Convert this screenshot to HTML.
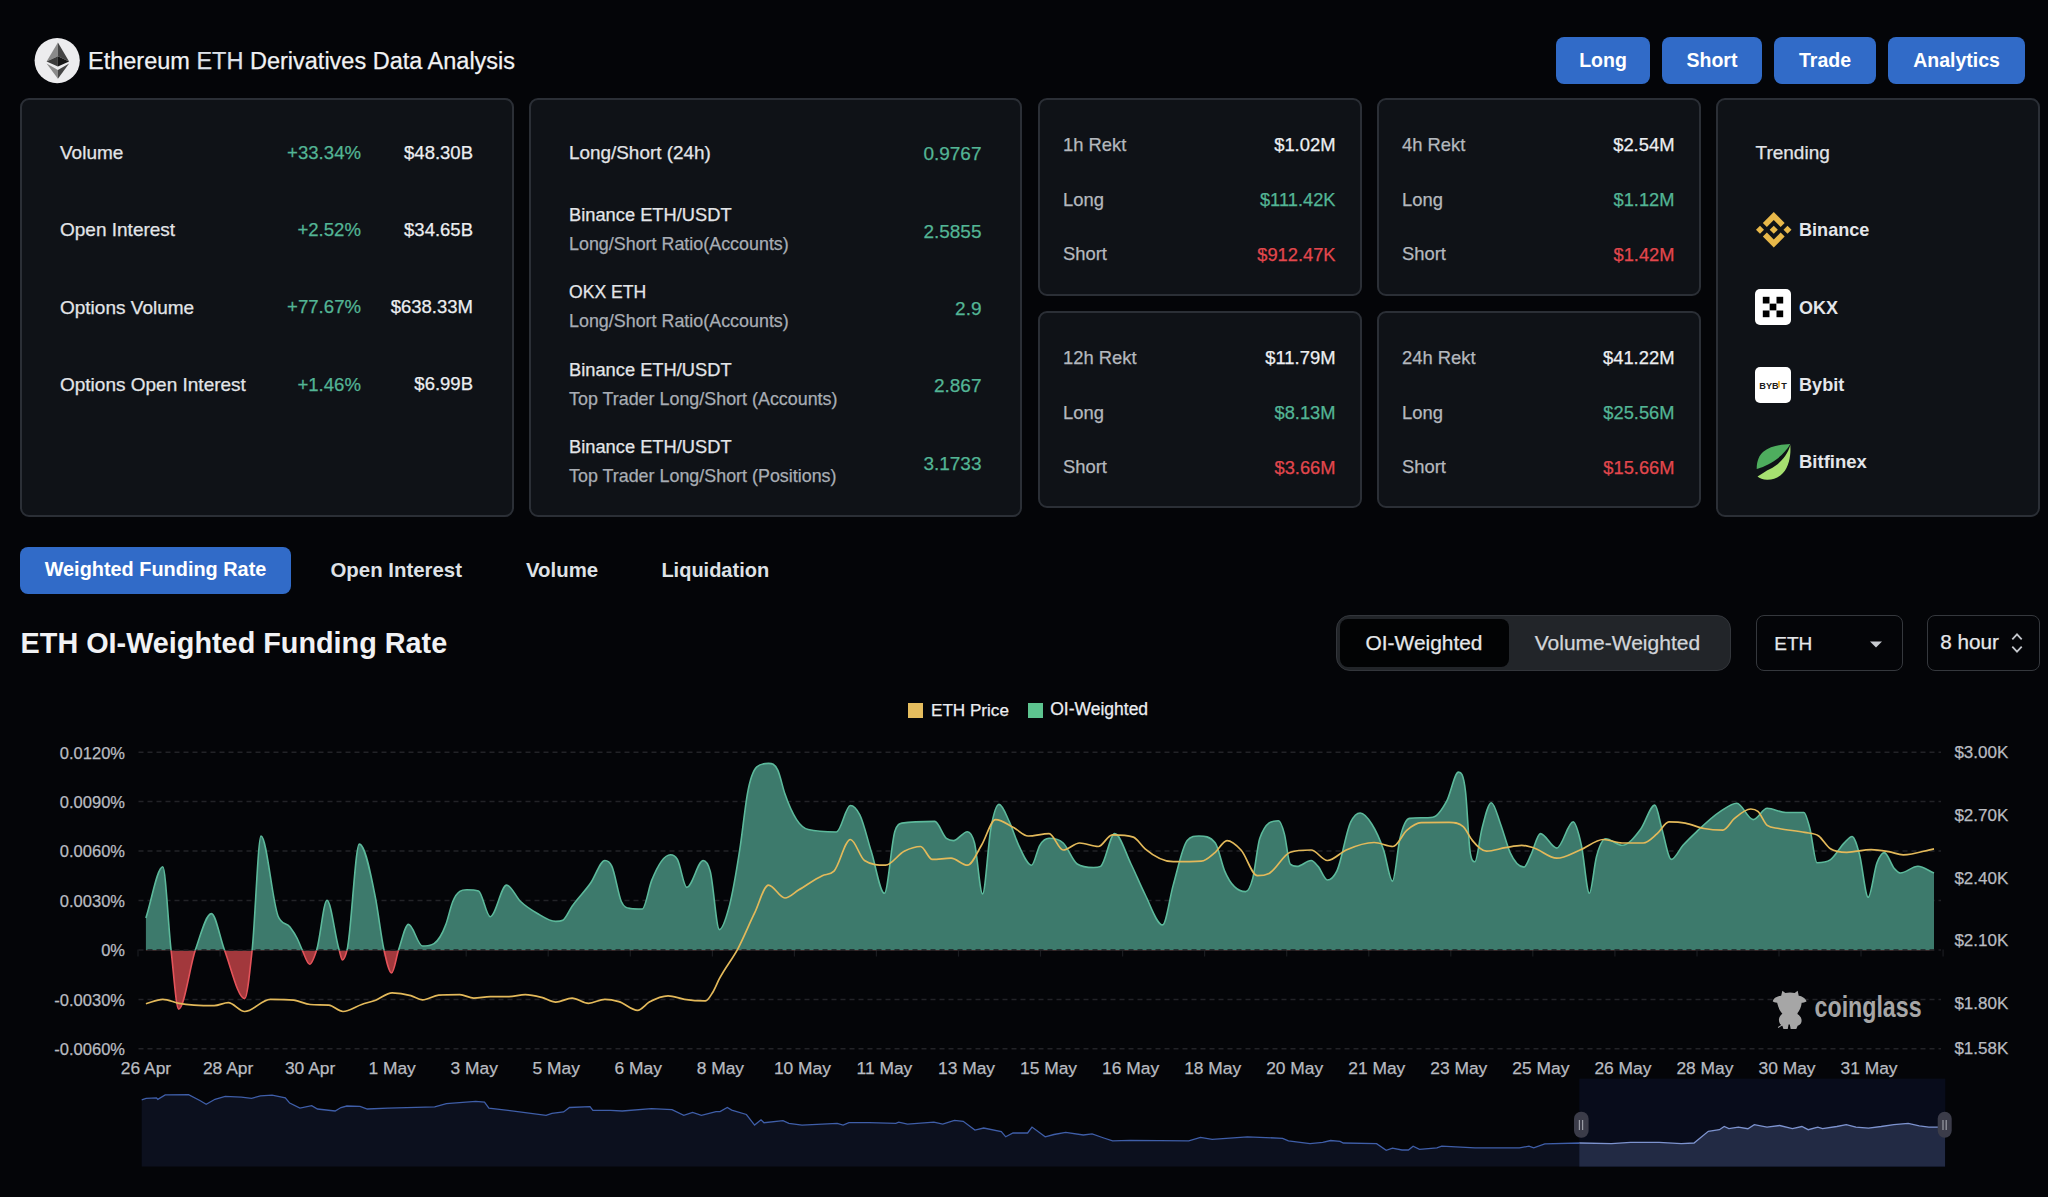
<!DOCTYPE html>
<html><head><meta charset="utf-8"><title>ETH Derivatives</title>
<style>
*{margin:0;padding:0;box-sizing:border-box}
html,body{width:2048px;height:1197px;overflow:hidden;background:#040508;font-family:"Liberation Sans",sans-serif;color:#eceef1}
.a{position:absolute;white-space:nowrap}
.s{-webkit-text-stroke:0.25px currentColor}
.card{position:absolute;background:#0f1217;border:2px solid #2b2f36;border-radius:9px}
.btn{position:absolute;background:#316bc8;border-radius:8px}
svg{position:absolute;overflow:visible}
</style></head><body>
<svg style="left:0;top:0" width="2048" height="100" viewBox="0 0 2048 100">
<circle cx="57.2" cy="60.6" r="22.6" fill="#ececee"/>
<polygon points="57.9,42.6 46.6,61.6 57.9,56.2" fill="#8a8a8a"/>
<polygon points="57.9,42.6 69.1,61.6 57.9,56.2" fill="#454545"/>
<polygon points="46.6,61.6 57.9,56.2 57.9,66.5" fill="#3c3c3c"/>
<polygon points="69.1,61.6 57.9,56.2 57.9,66.5" fill="#161616"/>
<polygon points="46.6,63.6 57.9,70.0 57.9,78.7" fill="#8a8a8a"/>
<polygon points="69.1,63.6 57.9,70.0 57.9,78.7" fill="#454545"/>
</svg>
<div class="a s" style="top:49.91px;font-size:23.5px;line-height:23.5px;color:#f1f2f4;left:88px;">Ethereum <span style="color:#dde2ea">ETH</span> Derivatives Data Analysis</div>
<div class="btn" style="left:1556px;top:37px;width:94px;height:47px"></div>
<div class="a" style="top:50.99px;font-size:19.5px;line-height:19.5px;color:#ffffff;font-weight:bold;left:1303.0px;width:600px;text-align:center;">Long</div>
<div class="btn" style="left:1662px;top:37px;width:100px;height:47px"></div>
<div class="a" style="top:50.99px;font-size:19.5px;line-height:19.5px;color:#ffffff;font-weight:bold;left:1412.0px;width:600px;text-align:center;">Short</div>
<div class="btn" style="left:1774px;top:37px;width:102px;height:47px"></div>
<div class="a" style="top:50.99px;font-size:19.5px;line-height:19.5px;color:#ffffff;font-weight:bold;left:1525.0px;width:600px;text-align:center;">Trade</div>
<div class="btn" style="left:1888px;top:37px;width:137px;height:47px"></div>
<div class="a" style="top:50.99px;font-size:19.5px;line-height:19.5px;color:#ffffff;font-weight:bold;left:1656.5px;width:600px;text-align:center;">Analytics</div>
<div class="card" style="left:20px;top:98px;width:494px;height:419px"></div>
<div class="card" style="left:529px;top:98px;width:493px;height:419px"></div>
<div class="card" style="left:1038px;top:98px;width:324px;height:198px"></div>
<div class="card" style="left:1377px;top:98px;width:324px;height:198px"></div>
<div class="card" style="left:1038px;top:311px;width:324px;height:197px"></div>
<div class="card" style="left:1377px;top:311px;width:324px;height:197px"></div>
<div class="card" style="left:1716px;top:98px;width:324px;height:419px"></div>
<div class="a s" style="top:143.12px;font-size:19px;line-height:19px;color:#e3e5e8;left:60px;">Volume</div>
<div class="a s" style="top:143.96px;font-size:18.6px;line-height:18.6px;color:#53b595;right:1687px;">+33.34%</div>
<div class="a s" style="top:143.54px;font-size:18.5px;line-height:18.5px;color:#eceef1;right:1575px;">$48.30B</div>
<div class="a s" style="top:220.32px;font-size:19px;line-height:19px;color:#e3e5e8;left:60px;">Open Interest</div>
<div class="a s" style="top:221.16px;font-size:18.6px;line-height:18.6px;color:#53b595;right:1687px;">+2.52%</div>
<div class="a s" style="top:220.74px;font-size:18.5px;line-height:18.5px;color:#eceef1;right:1575px;">$34.65B</div>
<div class="a s" style="top:297.52px;font-size:19px;line-height:19px;color:#e3e5e8;left:60px;">Options Volume</div>
<div class="a s" style="top:298.36px;font-size:18.6px;line-height:18.6px;color:#53b595;right:1687px;">+77.67%</div>
<div class="a s" style="top:297.94px;font-size:18.5px;line-height:18.5px;color:#eceef1;right:1575px;">$638.33M</div>
<div class="a s" style="top:374.72px;font-size:19px;line-height:19px;color:#e3e5e8;left:60px;">Options Open Interest</div>
<div class="a s" style="top:375.56px;font-size:18.6px;line-height:18.6px;color:#53b595;right:1687px;">+1.46%</div>
<div class="a s" style="top:375.14px;font-size:18.5px;line-height:18.5px;color:#eceef1;right:1575px;">$6.99B</div>
<div class="a s" style="top:143.60px;font-size:18.9px;line-height:18.9px;color:#e3e5e8;left:569px;">Long/Short (24h)</div>
<div class="a s" style="top:144.42px;font-size:19px;line-height:19px;color:#53b595;right:1066.5px;">0.9767</div>
<div class="a s" style="top:206.31px;font-size:18.3px;line-height:18.3px;color:#e3e5e8;left:569px;">Binance ETH/USDT</div>
<div class="a s" style="top:236.15px;font-size:17.9px;line-height:17.9px;color:#a8adb4;left:569px;">Long/Short Ratio(Accounts)</div>
<div class="a s" style="top:221.72px;font-size:19px;line-height:19px;color:#53b595;right:1066.5px;">2.5855</div>
<div class="a s" style="top:283.90px;font-size:17.6px;line-height:17.6px;color:#e3e5e8;left:569px;">OKX ETH</div>
<div class="a s" style="top:313.15px;font-size:17.9px;line-height:17.9px;color:#a8adb4;left:569px;">Long/Short Ratio(Accounts)</div>
<div class="a s" style="top:298.72px;font-size:19px;line-height:19px;color:#53b595;right:1066.5px;">2.9</div>
<div class="a s" style="top:360.71px;font-size:18.3px;line-height:18.3px;color:#e3e5e8;left:569px;">Binance ETH/USDT</div>
<div class="a s" style="top:390.55px;font-size:17.9px;line-height:17.9px;color:#a8adb4;left:569px;">Top Trader Long/Short (Accounts)</div>
<div class="a s" style="top:376.12px;font-size:19px;line-height:19px;color:#53b595;right:1066.5px;">2.867</div>
<div class="a s" style="top:438.21px;font-size:18.3px;line-height:18.3px;color:#e3e5e8;left:569px;">Binance ETH/USDT</div>
<div class="a s" style="top:468.05px;font-size:17.9px;line-height:17.9px;color:#a8adb4;left:569px;">Top Trader Long/Short (Positions)</div>
<div class="a s" style="top:453.62px;font-size:19px;line-height:19px;color:#53b595;right:1066.5px;">3.1733</div>
<div class="a s" style="top:135.92px;font-size:18.4px;line-height:18.4px;color:#b4b8be;left:1063px;">1h Rekt</div>
<div class="a s" style="top:135.92px;font-size:18.4px;line-height:18.4px;color:#eceef1;right:712.5px;">$1.02M</div>
<div class="a s" style="top:190.72px;font-size:18.4px;line-height:18.4px;color:#b4b8be;left:1063px;">Long</div>
<div class="a s" style="top:190.81px;font-size:18.3px;line-height:18.3px;color:#53b595;right:712.5px;">$111.42K</div>
<div class="a s" style="top:245.42px;font-size:18.4px;line-height:18.4px;color:#b4b8be;left:1063px;">Short</div>
<div class="a s" style="top:245.51px;font-size:18.3px;line-height:18.3px;color:#e2474d;right:712.5px;">$912.47K</div>
<div class="a s" style="top:135.92px;font-size:18.4px;line-height:18.4px;color:#b4b8be;left:1402px;">4h Rekt</div>
<div class="a s" style="top:135.92px;font-size:18.4px;line-height:18.4px;color:#eceef1;right:373.5px;">$2.54M</div>
<div class="a s" style="top:190.72px;font-size:18.4px;line-height:18.4px;color:#b4b8be;left:1402px;">Long</div>
<div class="a s" style="top:190.81px;font-size:18.3px;line-height:18.3px;color:#53b595;right:373.5px;">$1.12M</div>
<div class="a s" style="top:245.42px;font-size:18.4px;line-height:18.4px;color:#b4b8be;left:1402px;">Short</div>
<div class="a s" style="top:245.51px;font-size:18.3px;line-height:18.3px;color:#e2474d;right:373.5px;">$1.42M</div>
<div class="a s" style="top:348.92px;font-size:18.4px;line-height:18.4px;color:#b4b8be;left:1063px;">12h Rekt</div>
<div class="a s" style="top:348.92px;font-size:18.4px;line-height:18.4px;color:#eceef1;right:712.5px;">$11.79M</div>
<div class="a s" style="top:403.72px;font-size:18.4px;line-height:18.4px;color:#b4b8be;left:1063px;">Long</div>
<div class="a s" style="top:403.81px;font-size:18.3px;line-height:18.3px;color:#53b595;right:712.5px;">$8.13M</div>
<div class="a s" style="top:458.42px;font-size:18.4px;line-height:18.4px;color:#b4b8be;left:1063px;">Short</div>
<div class="a s" style="top:458.51px;font-size:18.3px;line-height:18.3px;color:#e2474d;right:712.5px;">$3.66M</div>
<div class="a s" style="top:348.92px;font-size:18.4px;line-height:18.4px;color:#b4b8be;left:1402px;">24h Rekt</div>
<div class="a s" style="top:348.92px;font-size:18.4px;line-height:18.4px;color:#eceef1;right:373.5px;">$41.22M</div>
<div class="a s" style="top:403.72px;font-size:18.4px;line-height:18.4px;color:#b4b8be;left:1402px;">Long</div>
<div class="a s" style="top:403.81px;font-size:18.3px;line-height:18.3px;color:#53b595;right:373.5px;">$25.56M</div>
<div class="a s" style="top:458.42px;font-size:18.4px;line-height:18.4px;color:#b4b8be;left:1402px;">Short</div>
<div class="a s" style="top:458.51px;font-size:18.3px;line-height:18.3px;color:#e2474d;right:373.5px;">$15.66M</div>
<div class="a s" style="top:143.02px;font-size:19px;line-height:19px;color:#e3e5e8;left:1755.5px;">Trending</div>
<div class="a" style="top:220.68px;font-size:18.1px;line-height:18.1px;color:#e4e6ea;font-weight:bold;left:1799px;">Binance</div>
<div class="a" style="top:299.06px;font-size:18px;line-height:18px;color:#e4e6ea;font-weight:bold;left:1799px;">OKX</div>
<div class="a" style="top:375.58px;font-size:18.1px;line-height:18.1px;color:#e4e6ea;font-weight:bold;left:1799px;">Bybit</div>
<div class="a" style="top:452.84px;font-size:18.5px;line-height:18.5px;color:#e4e6ea;font-weight:bold;left:1799px;">Bitfinex</div>
<svg style="left:1755.5px;top:212px" width="35.5" height="35.5" viewBox="0 0 126.61 126.61"><g fill="#e8b84a">
<path d="M38.73,53.2l24.59-24.58,24.6,24.6,14.3-14.31L63.32,0,24.42,38.9Z"/>
<path d="M0,63.31l14.3-14.31,14.31,14.31-14.31,14.3Z"/>
<path d="M38.73,73.41l24.59,24.59,24.6-24.6,14.31,14.29L63.32,126.61,24.42,87.72Z"/>
<path d="M98,63.31l14.3-14.31,14.31,14.3-14.31,14.31Z"/>
<path d="M77.83,63.3L63.32,48.78,48.82,63.28,63.32,77.8Z"/>
</g></svg>
<svg style="left:1755.4px;top:289.1px" width="36" height="36" viewBox="0 0 36 36">
<rect x="0" y="0" width="36" height="36" rx="5" fill="#ffffff"/>
<g fill="#000"><rect x="7.8" y="7.8" width="6.7" height="6.7"/><rect x="21.5" y="7.8" width="6.7" height="6.7"/>
<rect x="14.65" y="14.65" width="6.7" height="6.7"/><rect x="7.8" y="21.5" width="6.7" height="6.7"/><rect x="21.5" y="21.5" width="6.7" height="6.7"/></g>
</svg>
<svg style="left:1755.4px;top:366.9px" width="36" height="36" viewBox="0 0 36 36">
<rect x="0" y="0" width="36" height="36" rx="5" fill="#ffffff"/>
<text x="4.3" y="21.8" font-family="Liberation Sans" font-weight="bold" font-size="8.2" fill="#1a1a1a" textLength="27.5" lengthAdjust="spacingAndGlyphs">BYB T</text>
<rect x="23.2" y="14" width="1.5" height="6.5" fill="#f7a600"/>
</svg>
<svg style="left:1755.5px;top:443.8px" width="36" height="36" viewBox="0 0 36 36">
<path d="M34.3,0 C26,0.3 14,2 7.6,7.6 C3,11.5 0.8,17 0.7,25 C5,24 13,20.5 20.6,15.2 C26,11 31,6 34.3,0 Z" fill="#4ead5e"/>
<path d="M34.3,1.1 C35,10 33.5,22 27,29 C23,33.5 17,36 11,35.8 C7,35.7 3.5,34.5 1.5,32.6 C6,29.5 10,27 14,25 C22,21 31,13 34.3,1.1 Z" fill="#a6e070"/>
</svg>
<div class="btn" style="left:20px;top:547px;width:271px;height:47px"></div>
<div class="a" style="top:560.15px;font-size:19.9px;line-height:19.9px;color:#ffffff;font-weight:bold;left:-144.5px;width:600px;text-align:center;">Weighted Funding Rate</div>
<div class="a" style="top:559.73px;font-size:20.4px;line-height:20.4px;color:#dfe2e6;font-weight:bold;left:330.5px;">Open Interest</div>
<div class="a" style="top:559.73px;font-size:20.4px;line-height:20.4px;color:#dfe2e6;font-weight:bold;left:526px;">Volume</div>
<div class="a" style="top:560.07px;font-size:20px;line-height:20px;color:#dfe2e6;font-weight:bold;left:661.4px;">Liquidation</div>
<div class="a" style="top:628.62px;font-size:28.8px;line-height:28.8px;color:#f1f2f4;font-weight:bold;left:20.6px;">ETH OI-Weighted Funding Rate</div>
<div class="a" style="left:1336px;top:615px;width:395px;height:56px;background:#222529;border:1.5px solid #33363b;border-radius:14px"></div>
<div class="a" style="left:1340px;top:619px;width:169px;height:47.5px;background:#020304;border-radius:8px"></div>
<div class="a s" style="top:632.51px;font-size:20.9px;line-height:20.9px;color:#e6e8eb;left:1124px;width:600px;text-align:center;">OI-Weighted</div>
<div class="a s" style="top:632.42px;font-size:21px;line-height:21px;color:#d2d5d9;left:1317.4px;width:600px;text-align:center;">Volume-Weighted</div>
<div class="a" style="left:1755.5px;top:615px;width:147px;height:56px;border:1.5px solid #35383d;border-radius:8px"></div>
<div class="a s" style="top:633.72px;font-size:19px;line-height:19px;color:#e6e8eb;left:1774.3px;">ETH</div>
<svg style="left:1869px;top:641px" width="14" height="7" viewBox="0 0 14 7"><polygon points="1,0.5 13,0.5 7,6.5" fill="#c9ccd1"/></svg>
<div class="a" style="left:1927px;top:615px;width:113px;height:56px;border:1.5px solid #35383d;border-radius:8px"></div>
<div class="a s" style="top:632.28px;font-size:20.7px;line-height:20.7px;color:#e6e8eb;left:1940.3px;">8 hour</div>
<svg style="left:2010px;top:632px" width="14" height="22" viewBox="0 0 14 22"><polyline points="2.3,7.3 7,2.3 11.7,7.3" fill="none" stroke="#c4c7cc" stroke-width="1.8"/><polyline points="2.3,14.7 7,19.7 11.7,14.7" fill="none" stroke="#c4c7cc" stroke-width="1.8"/></svg>
<div class="a" style="left:908px;top:703px;width:15px;height:15px;background:#e5bd5e"></div>
<div class="a s" style="top:701.82px;font-size:17.1px;line-height:17.1px;color:#eceef1;left:931px;">ETH Price</div>
<div class="a" style="left:1027.5px;top:703px;width:15px;height:15px;background:#5dc48f"></div>
<div class="a s" style="top:701.49px;font-size:17.5px;line-height:17.5px;color:#eceef1;left:1050.2px;">OI-Weighted</div>
<div class="a s" style="top:744.53px;font-size:16.5px;line-height:16.5px;color:#b9bcc1;right:1923px;">0.0120%</div>
<div class="a s" style="top:793.96px;font-size:16.5px;line-height:16.5px;color:#b9bcc1;right:1923px;">0.0090%</div>
<div class="a s" style="top:843.39px;font-size:16.5px;line-height:16.5px;color:#b9bcc1;right:1923px;">0.0060%</div>
<div class="a s" style="top:892.82px;font-size:16.5px;line-height:16.5px;color:#b9bcc1;right:1923px;">0.0030%</div>
<div class="a s" style="top:942.25px;font-size:16.5px;line-height:16.5px;color:#b9bcc1;right:1923px;">0%</div>
<div class="a s" style="top:991.68px;font-size:16.5px;line-height:16.5px;color:#b9bcc1;right:1923px;">-0.0030%</div>
<div class="a s" style="top:1041.11px;font-size:16.5px;line-height:16.5px;color:#b9bcc1;right:1923px;">-0.0060%</div>
<div class="a s" style="top:743.71px;font-size:17px;line-height:17px;color:#b9bcc1;left:1954.4px;">$3.00K</div>
<div class="a s" style="top:806.61px;font-size:17px;line-height:17px;color:#b9bcc1;left:1954.4px;">$2.70K</div>
<div class="a s" style="top:869.51px;font-size:17px;line-height:17px;color:#b9bcc1;left:1954.4px;">$2.40K</div>
<div class="a s" style="top:932.31px;font-size:17px;line-height:17px;color:#b9bcc1;left:1954.4px;">$2.10K</div>
<div class="a s" style="top:995.21px;font-size:17px;line-height:17px;color:#b9bcc1;left:1954.4px;">$1.80K</div>
<div class="a s" style="top:1039.91px;font-size:17px;line-height:17px;color:#b9bcc1;left:1954.4px;">$1.58K</div>
<div class="a s" style="top:1060.47px;font-size:17.4px;line-height:17.4px;color:#b9bcc1;left:-154.0px;width:600px;text-align:center;">26 Apr</div>
<div class="a s" style="top:1060.47px;font-size:17.4px;line-height:17.4px;color:#b9bcc1;left:-71.94999999999999px;width:600px;text-align:center;">28 Apr</div>
<div class="a s" style="top:1060.47px;font-size:17.4px;line-height:17.4px;color:#b9bcc1;left:10.100000000000023px;width:600px;text-align:center;">30 Apr</div>
<div class="a s" style="top:1060.47px;font-size:17.4px;line-height:17.4px;color:#b9bcc1;left:92.14999999999998px;width:600px;text-align:center;">1 May</div>
<div class="a s" style="top:1060.47px;font-size:17.4px;line-height:17.4px;color:#b9bcc1;left:174.2px;width:600px;text-align:center;">3 May</div>
<div class="a s" style="top:1060.47px;font-size:17.4px;line-height:17.4px;color:#b9bcc1;left:256.25px;width:600px;text-align:center;">5 May</div>
<div class="a s" style="top:1060.47px;font-size:17.4px;line-height:17.4px;color:#b9bcc1;left:338.29999999999995px;width:600px;text-align:center;">6 May</div>
<div class="a s" style="top:1060.47px;font-size:17.4px;line-height:17.4px;color:#b9bcc1;left:420.35px;width:600px;text-align:center;">8 May</div>
<div class="a s" style="top:1060.47px;font-size:17.4px;line-height:17.4px;color:#b9bcc1;left:502.4px;width:600px;text-align:center;">10 May</div>
<div class="a s" style="top:1060.47px;font-size:17.4px;line-height:17.4px;color:#b9bcc1;left:584.4499999999999px;width:600px;text-align:center;">11 May</div>
<div class="a s" style="top:1060.47px;font-size:17.4px;line-height:17.4px;color:#b9bcc1;left:666.5px;width:600px;text-align:center;">13 May</div>
<div class="a s" style="top:1060.47px;font-size:17.4px;line-height:17.4px;color:#b9bcc1;left:748.55px;width:600px;text-align:center;">15 May</div>
<div class="a s" style="top:1060.47px;font-size:17.4px;line-height:17.4px;color:#b9bcc1;left:830.5999999999999px;width:600px;text-align:center;">16 May</div>
<div class="a s" style="top:1060.47px;font-size:17.4px;line-height:17.4px;color:#b9bcc1;left:912.6499999999999px;width:600px;text-align:center;">18 May</div>
<div class="a s" style="top:1060.47px;font-size:17.4px;line-height:17.4px;color:#b9bcc1;left:994.7px;width:600px;text-align:center;">20 May</div>
<div class="a s" style="top:1060.47px;font-size:17.4px;line-height:17.4px;color:#b9bcc1;left:1076.75px;width:600px;text-align:center;">21 May</div>
<div class="a s" style="top:1060.47px;font-size:17.4px;line-height:17.4px;color:#b9bcc1;left:1158.8px;width:600px;text-align:center;">23 May</div>
<div class="a s" style="top:1060.47px;font-size:17.4px;line-height:17.4px;color:#b9bcc1;left:1240.85px;width:600px;text-align:center;">25 May</div>
<div class="a s" style="top:1060.47px;font-size:17.4px;line-height:17.4px;color:#b9bcc1;left:1322.8999999999999px;width:600px;text-align:center;">26 May</div>
<div class="a s" style="top:1060.47px;font-size:17.4px;line-height:17.4px;color:#b9bcc1;left:1404.95px;width:600px;text-align:center;">28 May</div>
<div class="a s" style="top:1060.47px;font-size:17.4px;line-height:17.4px;color:#b9bcc1;left:1487.0px;width:600px;text-align:center;">30 May</div>
<div class="a s" style="top:1060.47px;font-size:17.4px;line-height:17.4px;color:#b9bcc1;left:1569.05px;width:600px;text-align:center;">31 May</div>
<svg style="left:0;top:0" width="2048" height="1197" viewBox="0 0 2048 1197">
<defs>
<clipPath id="cup"><rect x="0" y="0" width="2048" height="950.4"/></clipPath>
<clipPath id="cdn"><rect x="0" y="950.4" width="2048" height="400"/></clipPath>
</defs>
<line x1="138.5" y1="752.2" x2="1941" y2="752.2" stroke="#222327" stroke-width="1.5" stroke-dasharray="5 4"/><line x1="138.5" y1="801.6" x2="1941" y2="801.6" stroke="#222327" stroke-width="1.5" stroke-dasharray="5 4"/><line x1="138.5" y1="851.1" x2="1941" y2="851.1" stroke="#222327" stroke-width="1.5" stroke-dasharray="5 4"/><line x1="138.5" y1="900.5" x2="1941" y2="900.5" stroke="#222327" stroke-width="1.5" stroke-dasharray="5 4"/><line x1="138.5" y1="999.4" x2="1941" y2="999.4" stroke="#222327" stroke-width="1.5" stroke-dasharray="5 4"/><line x1="138.5" y1="1048.8" x2="1941" y2="1048.8" stroke="#222327" stroke-width="1.5" stroke-dasharray="5 4"/>
<line x1="138.0" y1="949.6" x2="138.0" y2="956.6" stroke="#1a1c20" stroke-width="1.2"/><line x1="220.1" y1="949.6" x2="220.1" y2="956.6" stroke="#1a1c20" stroke-width="1.2"/><line x1="302.1" y1="949.6" x2="302.1" y2="956.6" stroke="#1a1c20" stroke-width="1.2"/><line x1="384.1" y1="949.6" x2="384.1" y2="956.6" stroke="#1a1c20" stroke-width="1.2"/><line x1="466.2" y1="949.6" x2="466.2" y2="956.6" stroke="#1a1c20" stroke-width="1.2"/><line x1="548.2" y1="949.6" x2="548.2" y2="956.6" stroke="#1a1c20" stroke-width="1.2"/><line x1="630.3" y1="949.6" x2="630.3" y2="956.6" stroke="#1a1c20" stroke-width="1.2"/><line x1="712.4" y1="949.6" x2="712.4" y2="956.6" stroke="#1a1c20" stroke-width="1.2"/><line x1="794.4" y1="949.6" x2="794.4" y2="956.6" stroke="#1a1c20" stroke-width="1.2"/><line x1="876.4" y1="949.6" x2="876.4" y2="956.6" stroke="#1a1c20" stroke-width="1.2"/><line x1="958.5" y1="949.6" x2="958.5" y2="956.6" stroke="#1a1c20" stroke-width="1.2"/><line x1="1040.5" y1="949.6" x2="1040.5" y2="956.6" stroke="#1a1c20" stroke-width="1.2"/><line x1="1122.6" y1="949.6" x2="1122.6" y2="956.6" stroke="#1a1c20" stroke-width="1.2"/><line x1="1204.6" y1="949.6" x2="1204.6" y2="956.6" stroke="#1a1c20" stroke-width="1.2"/><line x1="1286.7" y1="949.6" x2="1286.7" y2="956.6" stroke="#1a1c20" stroke-width="1.2"/><line x1="1368.8" y1="949.6" x2="1368.8" y2="956.6" stroke="#1a1c20" stroke-width="1.2"/><line x1="1450.8" y1="949.6" x2="1450.8" y2="956.6" stroke="#1a1c20" stroke-width="1.2"/><line x1="1532.8" y1="949.6" x2="1532.8" y2="956.6" stroke="#1a1c20" stroke-width="1.2"/><line x1="1614.9" y1="949.6" x2="1614.9" y2="956.6" stroke="#1a1c20" stroke-width="1.2"/><line x1="1697.0" y1="949.6" x2="1697.0" y2="956.6" stroke="#1a1c20" stroke-width="1.2"/><line x1="1779.0" y1="949.6" x2="1779.0" y2="956.6" stroke="#1a1c20" stroke-width="1.2"/><line x1="1861.0" y1="949.6" x2="1861.0" y2="956.6" stroke="#1a1c20" stroke-width="1.2"/><line x1="1943.1" y1="949.6" x2="1943.1" y2="956.6" stroke="#1a1c20" stroke-width="1.2"/>
<path d="M145.9,917.9 C151.5,900.9 157.2,866.8 162.8,866.8 C165.5,866.8 168.3,925.2 171.0,949.5 C173.6,972.3 176.1,1009.1 178.7,1009.1 C184.3,1009.1 189.9,965.7 195.5,949.5 C200.8,934.2 206.1,913.6 211.4,913.6 C215.7,913.6 220.0,938.2 224.3,949.5 C231.1,967.4 237.9,998.6 244.7,998.6 C247.2,998.6 249.7,973.2 252.2,949.5 C255.1,921.7 258.1,836.0 261.0,836.0 C266.7,836.0 272.3,901.9 278.0,916.0 C282.0,925.9 286.0,921.7 290.0,927.0 C292.3,930.1 294.7,933.3 297.0,938.0 C298.7,941.3 300.3,945.9 302.0,949.5 C304.6,955.0 307.1,964.2 309.7,964.2 C312.1,964.2 314.4,957.1 316.8,949.5 C320.2,938.6 323.6,900.3 327.0,900.3 C331.0,900.3 335.0,936.5 339.0,949.5 C340.2,953.3 341.3,960.0 342.5,960.0 C344.1,960.0 345.6,955.8 347.2,949.5 C351.2,933.2 355.3,844.1 359.3,844.1 C364.8,844.1 370.2,870.6 375.7,899.1 C378.4,913.4 381.2,937.1 383.9,949.5 C386.5,961.2 389.0,972.9 391.6,972.9 C394.0,972.9 396.3,956.6 398.7,949.5 C402.0,939.7 405.2,924.4 408.5,924.4 C413.2,924.4 417.8,946.0 422.5,946.0 C426.3,946.0 430.2,946.0 434.0,943.6 C437.9,941.2 441.8,935.3 445.7,924.9 C448.1,918.6 450.4,907.3 452.8,901.5 C457.5,890.0 462.1,889.8 466.8,889.8 C470.7,889.8 474.6,889.8 478.5,891.0 C482.4,892.2 486.3,916.7 490.2,916.7 C495.7,916.7 501.1,885.1 506.6,885.1 C511.3,885.1 515.9,897.0 520.6,901.5 C526.1,906.8 531.5,910.0 537.0,913.2 C543.2,916.8 549.5,921.4 555.7,921.4 C558.1,921.4 560.4,921.4 562.8,920.2 C565.9,918.6 569.0,910.6 572.1,906.2 C578.3,897.3 584.6,891.8 590.8,882.8 C595.5,876.0 600.2,860.5 604.9,860.5 C607.2,860.5 609.6,861.6 611.9,866.4 C615.0,872.9 618.2,894.5 621.3,901.5 C624.4,908.4 627.5,908.1 630.6,908.5 C634.5,909.0 638.4,909.0 642.3,909.0 C645.4,909.0 648.6,888.2 651.7,880.4 C657.9,864.9 664.2,854.7 670.4,854.7 C672.7,854.7 675.1,855.5 677.4,859.4 C680.5,864.6 683.7,887.4 686.8,887.4 C692.3,887.4 697.7,860.5 703.2,860.5 C705.5,860.5 707.9,862.7 710.2,871.1 C713.3,882.2 716.3,929.6 719.4,929.6 C722.5,929.6 725.6,919.8 728.7,908.5 C732.6,894.2 736.5,871.1 740.4,845.3 C742.7,829.8 745.1,806.5 747.4,793.8 C750.5,776.8 753.7,769.7 756.8,766.9 C760.7,763.4 764.6,763.4 768.5,763.4 C771.6,763.4 774.8,763.4 777.9,770.4 C780.2,775.6 782.6,787.0 784.9,793.8 C788.8,805.2 792.7,813.6 796.6,819.6 C800.5,825.6 804.4,828.6 808.3,829.6 C817.7,832.0 827.0,832.0 836.4,832.0 C841.1,832.0 845.7,805.5 850.4,805.5 C853.5,805.5 856.7,808.7 859.8,814.9 C863.7,822.6 867.6,839.9 871.5,852.3 C875.8,866.0 880.1,893.3 884.4,893.3 C887.9,893.3 891.4,842.0 894.9,831.3 C897.2,824.1 899.6,823.5 901.9,823.1 C912.8,821.4 923.8,821.4 934.7,821.4 C938.6,821.4 942.5,835.4 946.4,838.3 C948.7,840.0 951.1,840.6 953.4,840.6 C958.1,840.6 962.7,831.7 967.4,831.7 C969.8,831.7 972.1,834.0 974.5,843.0 C977.2,853.2 979.9,894.0 982.6,894.0 C985.3,894.0 988.1,843.8 990.8,828.9 C993.5,814.0 996.3,804.4 999.0,804.4 C1002.5,804.4 1005.9,814.5 1009.4,821.9 C1012.5,828.5 1015.6,838.8 1018.7,845.3 C1023.0,854.4 1027.3,865.2 1031.6,865.2 C1034.3,865.2 1037.1,849.8 1039.8,845.3 C1042.9,840.2 1046.0,838.3 1049.1,838.3 C1053.8,838.3 1058.5,838.7 1063.2,843.0 C1067.9,847.3 1072.5,861.0 1077.2,864.0 C1082.7,867.5 1088.1,867.5 1093.6,867.5 C1095.9,867.5 1098.3,867.5 1100.6,866.4 C1105.3,864.2 1110.0,833.6 1114.7,833.6 C1120.1,833.6 1125.6,853.0 1131.0,864.0 C1135.7,873.5 1140.4,885.2 1145.1,894.5 C1150.9,906.0 1156.8,924.9 1162.6,924.9 C1166.1,924.9 1169.7,897.5 1173.2,885.1 C1177.9,868.7 1182.5,846.1 1187.2,840.6 C1191.1,836.0 1195.0,836.0 1198.9,836.0 C1204.4,836.0 1209.8,836.0 1215.3,843.0 C1218.4,847.0 1221.6,863.7 1224.7,871.1 C1231.7,887.7 1238.7,891.6 1245.7,891.6 C1248.1,891.6 1250.4,887.1 1252.8,878.1 C1255.1,869.2 1257.5,844.9 1259.8,838.3 C1266.0,820.7 1272.3,820.7 1278.5,820.7 C1280.4,820.7 1282.4,826.5 1284.3,833.6 C1286.3,840.8 1288.2,861.9 1290.2,864.0 C1292.5,866.4 1294.7,866.4 1297.0,866.4 C1301.7,866.4 1306.4,860.5 1311.1,860.5 C1313.4,860.5 1315.8,863.8 1318.1,866.4 C1321.2,869.8 1324.3,880.0 1327.4,880.0 C1330.5,880.0 1333.7,877.3 1336.8,871.1 C1341.5,861.9 1346.1,831.1 1350.8,821.9 C1353.9,815.7 1357.1,813.0 1360.2,813.0 C1364.1,813.0 1368.0,818.0 1371.9,824.2 C1375.8,830.4 1379.7,838.5 1383.6,850.0 C1386.6,858.7 1389.5,881.1 1392.5,881.1 C1395.0,881.1 1397.5,848.6 1400.0,838.3 C1403.1,825.4 1406.3,818.9 1409.4,818.4 C1417.2,817.2 1425.0,818.4 1432.8,817.2 C1437.5,816.5 1442.1,809.5 1446.8,800.8 C1450.7,793.5 1454.6,772.1 1458.5,772.1 C1460.8,772.1 1463.2,772.1 1465.5,791.5 C1467.1,804.5 1468.6,842.9 1470.2,852.3 C1471.8,861.7 1473.3,861.7 1474.9,861.7 C1477.2,861.7 1479.6,837.9 1481.9,828.9 C1485.0,816.8 1488.2,802.7 1491.3,802.7 C1494.4,802.7 1497.5,816.0 1500.6,824.2 C1503.7,832.5 1506.9,845.4 1510.0,852.3 C1514.7,862.6 1519.3,867.1 1524.0,867.1 C1526.3,867.1 1528.7,859.3 1531.0,854.7 C1534.1,848.5 1537.3,833.6 1540.4,833.6 C1545.9,833.6 1551.3,848.1 1556.8,848.1 C1562.3,848.1 1567.7,821.9 1573.2,821.9 C1575.9,821.9 1578.7,833.1 1581.4,845.3 C1584.1,857.2 1586.7,893.3 1589.4,893.3 C1591.7,893.3 1594.1,865.9 1596.4,857.0 C1599.5,845.2 1602.6,838.8 1605.7,838.8 C1611.2,838.8 1616.6,845.3 1622.1,845.3 C1628.3,845.3 1634.6,837.2 1640.8,828.9 C1645.5,822.6 1650.2,805.1 1654.9,805.1 C1657.2,805.1 1659.6,821.1 1661.9,828.9 C1665.0,839.3 1668.2,859.4 1671.3,859.4 C1675.2,859.4 1679.1,849.6 1683.0,845.3 C1687.7,840.1 1692.3,835.7 1697.0,831.3 C1704.8,823.9 1712.6,816.4 1720.4,811.4 C1725.9,807.9 1731.3,803.2 1736.8,803.2 C1742.3,803.2 1747.7,819.6 1753.2,819.6 C1757.9,819.6 1762.5,808.3 1767.2,808.3 C1773.4,808.3 1779.7,812.5 1785.9,812.5 C1791.9,812.5 1797.9,812.5 1803.9,812.5 C1805.8,812.5 1807.8,820.8 1809.7,827.7 C1812.1,836.4 1814.6,862.8 1817.0,862.8 C1821.4,862.8 1825.8,862.8 1830.2,859.9 C1835.1,856.7 1839.9,846.8 1844.8,842.3 C1847.2,840.0 1849.7,836.5 1852.1,836.5 C1854.5,836.5 1857.0,845.4 1859.4,854.0 C1862.3,864.4 1865.3,897.3 1868.2,897.3 C1871.1,897.3 1874.1,870.3 1877.0,862.8 C1879.4,856.6 1881.9,852.6 1884.3,852.6 C1887.7,852.6 1891.1,865.2 1894.5,868.7 C1896.5,870.7 1898.4,873.0 1900.4,873.0 C1906.2,873.0 1912.1,866.3 1917.9,866.3 C1923.3,866.3 1928.6,870.8 1934.0,873.0 L1934,950.4 L145.9,950.4 Z" fill="#3d7a6c" clip-path="url(#cup)"/>
<path d="M145.9,917.9 C151.5,900.9 157.2,866.8 162.8,866.8 C165.5,866.8 168.3,925.2 171.0,949.5 C173.6,972.3 176.1,1009.1 178.7,1009.1 C184.3,1009.1 189.9,965.7 195.5,949.5 C200.8,934.2 206.1,913.6 211.4,913.6 C215.7,913.6 220.0,938.2 224.3,949.5 C231.1,967.4 237.9,998.6 244.7,998.6 C247.2,998.6 249.7,973.2 252.2,949.5 C255.1,921.7 258.1,836.0 261.0,836.0 C266.7,836.0 272.3,901.9 278.0,916.0 C282.0,925.9 286.0,921.7 290.0,927.0 C292.3,930.1 294.7,933.3 297.0,938.0 C298.7,941.3 300.3,945.9 302.0,949.5 C304.6,955.0 307.1,964.2 309.7,964.2 C312.1,964.2 314.4,957.1 316.8,949.5 C320.2,938.6 323.6,900.3 327.0,900.3 C331.0,900.3 335.0,936.5 339.0,949.5 C340.2,953.3 341.3,960.0 342.5,960.0 C344.1,960.0 345.6,955.8 347.2,949.5 C351.2,933.2 355.3,844.1 359.3,844.1 C364.8,844.1 370.2,870.6 375.7,899.1 C378.4,913.4 381.2,937.1 383.9,949.5 C386.5,961.2 389.0,972.9 391.6,972.9 C394.0,972.9 396.3,956.6 398.7,949.5 C402.0,939.7 405.2,924.4 408.5,924.4 C413.2,924.4 417.8,946.0 422.5,946.0 C426.3,946.0 430.2,946.0 434.0,943.6 C437.9,941.2 441.8,935.3 445.7,924.9 C448.1,918.6 450.4,907.3 452.8,901.5 C457.5,890.0 462.1,889.8 466.8,889.8 C470.7,889.8 474.6,889.8 478.5,891.0 C482.4,892.2 486.3,916.7 490.2,916.7 C495.7,916.7 501.1,885.1 506.6,885.1 C511.3,885.1 515.9,897.0 520.6,901.5 C526.1,906.8 531.5,910.0 537.0,913.2 C543.2,916.8 549.5,921.4 555.7,921.4 C558.1,921.4 560.4,921.4 562.8,920.2 C565.9,918.6 569.0,910.6 572.1,906.2 C578.3,897.3 584.6,891.8 590.8,882.8 C595.5,876.0 600.2,860.5 604.9,860.5 C607.2,860.5 609.6,861.6 611.9,866.4 C615.0,872.9 618.2,894.5 621.3,901.5 C624.4,908.4 627.5,908.1 630.6,908.5 C634.5,909.0 638.4,909.0 642.3,909.0 C645.4,909.0 648.6,888.2 651.7,880.4 C657.9,864.9 664.2,854.7 670.4,854.7 C672.7,854.7 675.1,855.5 677.4,859.4 C680.5,864.6 683.7,887.4 686.8,887.4 C692.3,887.4 697.7,860.5 703.2,860.5 C705.5,860.5 707.9,862.7 710.2,871.1 C713.3,882.2 716.3,929.6 719.4,929.6 C722.5,929.6 725.6,919.8 728.7,908.5 C732.6,894.2 736.5,871.1 740.4,845.3 C742.7,829.8 745.1,806.5 747.4,793.8 C750.5,776.8 753.7,769.7 756.8,766.9 C760.7,763.4 764.6,763.4 768.5,763.4 C771.6,763.4 774.8,763.4 777.9,770.4 C780.2,775.6 782.6,787.0 784.9,793.8 C788.8,805.2 792.7,813.6 796.6,819.6 C800.5,825.6 804.4,828.6 808.3,829.6 C817.7,832.0 827.0,832.0 836.4,832.0 C841.1,832.0 845.7,805.5 850.4,805.5 C853.5,805.5 856.7,808.7 859.8,814.9 C863.7,822.6 867.6,839.9 871.5,852.3 C875.8,866.0 880.1,893.3 884.4,893.3 C887.9,893.3 891.4,842.0 894.9,831.3 C897.2,824.1 899.6,823.5 901.9,823.1 C912.8,821.4 923.8,821.4 934.7,821.4 C938.6,821.4 942.5,835.4 946.4,838.3 C948.7,840.0 951.1,840.6 953.4,840.6 C958.1,840.6 962.7,831.7 967.4,831.7 C969.8,831.7 972.1,834.0 974.5,843.0 C977.2,853.2 979.9,894.0 982.6,894.0 C985.3,894.0 988.1,843.8 990.8,828.9 C993.5,814.0 996.3,804.4 999.0,804.4 C1002.5,804.4 1005.9,814.5 1009.4,821.9 C1012.5,828.5 1015.6,838.8 1018.7,845.3 C1023.0,854.4 1027.3,865.2 1031.6,865.2 C1034.3,865.2 1037.1,849.8 1039.8,845.3 C1042.9,840.2 1046.0,838.3 1049.1,838.3 C1053.8,838.3 1058.5,838.7 1063.2,843.0 C1067.9,847.3 1072.5,861.0 1077.2,864.0 C1082.7,867.5 1088.1,867.5 1093.6,867.5 C1095.9,867.5 1098.3,867.5 1100.6,866.4 C1105.3,864.2 1110.0,833.6 1114.7,833.6 C1120.1,833.6 1125.6,853.0 1131.0,864.0 C1135.7,873.5 1140.4,885.2 1145.1,894.5 C1150.9,906.0 1156.8,924.9 1162.6,924.9 C1166.1,924.9 1169.7,897.5 1173.2,885.1 C1177.9,868.7 1182.5,846.1 1187.2,840.6 C1191.1,836.0 1195.0,836.0 1198.9,836.0 C1204.4,836.0 1209.8,836.0 1215.3,843.0 C1218.4,847.0 1221.6,863.7 1224.7,871.1 C1231.7,887.7 1238.7,891.6 1245.7,891.6 C1248.1,891.6 1250.4,887.1 1252.8,878.1 C1255.1,869.2 1257.5,844.9 1259.8,838.3 C1266.0,820.7 1272.3,820.7 1278.5,820.7 C1280.4,820.7 1282.4,826.5 1284.3,833.6 C1286.3,840.8 1288.2,861.9 1290.2,864.0 C1292.5,866.4 1294.7,866.4 1297.0,866.4 C1301.7,866.4 1306.4,860.5 1311.1,860.5 C1313.4,860.5 1315.8,863.8 1318.1,866.4 C1321.2,869.8 1324.3,880.0 1327.4,880.0 C1330.5,880.0 1333.7,877.3 1336.8,871.1 C1341.5,861.9 1346.1,831.1 1350.8,821.9 C1353.9,815.7 1357.1,813.0 1360.2,813.0 C1364.1,813.0 1368.0,818.0 1371.9,824.2 C1375.8,830.4 1379.7,838.5 1383.6,850.0 C1386.6,858.7 1389.5,881.1 1392.5,881.1 C1395.0,881.1 1397.5,848.6 1400.0,838.3 C1403.1,825.4 1406.3,818.9 1409.4,818.4 C1417.2,817.2 1425.0,818.4 1432.8,817.2 C1437.5,816.5 1442.1,809.5 1446.8,800.8 C1450.7,793.5 1454.6,772.1 1458.5,772.1 C1460.8,772.1 1463.2,772.1 1465.5,791.5 C1467.1,804.5 1468.6,842.9 1470.2,852.3 C1471.8,861.7 1473.3,861.7 1474.9,861.7 C1477.2,861.7 1479.6,837.9 1481.9,828.9 C1485.0,816.8 1488.2,802.7 1491.3,802.7 C1494.4,802.7 1497.5,816.0 1500.6,824.2 C1503.7,832.5 1506.9,845.4 1510.0,852.3 C1514.7,862.6 1519.3,867.1 1524.0,867.1 C1526.3,867.1 1528.7,859.3 1531.0,854.7 C1534.1,848.5 1537.3,833.6 1540.4,833.6 C1545.9,833.6 1551.3,848.1 1556.8,848.1 C1562.3,848.1 1567.7,821.9 1573.2,821.9 C1575.9,821.9 1578.7,833.1 1581.4,845.3 C1584.1,857.2 1586.7,893.3 1589.4,893.3 C1591.7,893.3 1594.1,865.9 1596.4,857.0 C1599.5,845.2 1602.6,838.8 1605.7,838.8 C1611.2,838.8 1616.6,845.3 1622.1,845.3 C1628.3,845.3 1634.6,837.2 1640.8,828.9 C1645.5,822.6 1650.2,805.1 1654.9,805.1 C1657.2,805.1 1659.6,821.1 1661.9,828.9 C1665.0,839.3 1668.2,859.4 1671.3,859.4 C1675.2,859.4 1679.1,849.6 1683.0,845.3 C1687.7,840.1 1692.3,835.7 1697.0,831.3 C1704.8,823.9 1712.6,816.4 1720.4,811.4 C1725.9,807.9 1731.3,803.2 1736.8,803.2 C1742.3,803.2 1747.7,819.6 1753.2,819.6 C1757.9,819.6 1762.5,808.3 1767.2,808.3 C1773.4,808.3 1779.7,812.5 1785.9,812.5 C1791.9,812.5 1797.9,812.5 1803.9,812.5 C1805.8,812.5 1807.8,820.8 1809.7,827.7 C1812.1,836.4 1814.6,862.8 1817.0,862.8 C1821.4,862.8 1825.8,862.8 1830.2,859.9 C1835.1,856.7 1839.9,846.8 1844.8,842.3 C1847.2,840.0 1849.7,836.5 1852.1,836.5 C1854.5,836.5 1857.0,845.4 1859.4,854.0 C1862.3,864.4 1865.3,897.3 1868.2,897.3 C1871.1,897.3 1874.1,870.3 1877.0,862.8 C1879.4,856.6 1881.9,852.6 1884.3,852.6 C1887.7,852.6 1891.1,865.2 1894.5,868.7 C1896.5,870.7 1898.4,873.0 1900.4,873.0 C1906.2,873.0 1912.1,866.3 1917.9,866.3 C1923.3,866.3 1928.6,870.8 1934.0,873.0 L1934,950.4 L145.9,950.4 Z" fill="#a2383c" clip-path="url(#cdn)"/>
<line x1="138.5" y1="949.9" x2="1941" y2="949.9" stroke="#1c1d21" stroke-width="1.5" stroke-dasharray="5 4"/>
<path d="M145.9,917.9 C151.5,900.9 157.2,866.8 162.8,866.8 C165.5,866.8 168.3,925.2 171.0,949.5 C173.6,972.3 176.1,1009.1 178.7,1009.1 C184.3,1009.1 189.9,965.7 195.5,949.5 C200.8,934.2 206.1,913.6 211.4,913.6 C215.7,913.6 220.0,938.2 224.3,949.5 C231.1,967.4 237.9,998.6 244.7,998.6 C247.2,998.6 249.7,973.2 252.2,949.5 C255.1,921.7 258.1,836.0 261.0,836.0 C266.7,836.0 272.3,901.9 278.0,916.0 C282.0,925.9 286.0,921.7 290.0,927.0 C292.3,930.1 294.7,933.3 297.0,938.0 C298.7,941.3 300.3,945.9 302.0,949.5 C304.6,955.0 307.1,964.2 309.7,964.2 C312.1,964.2 314.4,957.1 316.8,949.5 C320.2,938.6 323.6,900.3 327.0,900.3 C331.0,900.3 335.0,936.5 339.0,949.5 C340.2,953.3 341.3,960.0 342.5,960.0 C344.1,960.0 345.6,955.8 347.2,949.5 C351.2,933.2 355.3,844.1 359.3,844.1 C364.8,844.1 370.2,870.6 375.7,899.1 C378.4,913.4 381.2,937.1 383.9,949.5 C386.5,961.2 389.0,972.9 391.6,972.9 C394.0,972.9 396.3,956.6 398.7,949.5 C402.0,939.7 405.2,924.4 408.5,924.4 C413.2,924.4 417.8,946.0 422.5,946.0 C426.3,946.0 430.2,946.0 434.0,943.6 C437.9,941.2 441.8,935.3 445.7,924.9 C448.1,918.6 450.4,907.3 452.8,901.5 C457.5,890.0 462.1,889.8 466.8,889.8 C470.7,889.8 474.6,889.8 478.5,891.0 C482.4,892.2 486.3,916.7 490.2,916.7 C495.7,916.7 501.1,885.1 506.6,885.1 C511.3,885.1 515.9,897.0 520.6,901.5 C526.1,906.8 531.5,910.0 537.0,913.2 C543.2,916.8 549.5,921.4 555.7,921.4 C558.1,921.4 560.4,921.4 562.8,920.2 C565.9,918.6 569.0,910.6 572.1,906.2 C578.3,897.3 584.6,891.8 590.8,882.8 C595.5,876.0 600.2,860.5 604.9,860.5 C607.2,860.5 609.6,861.6 611.9,866.4 C615.0,872.9 618.2,894.5 621.3,901.5 C624.4,908.4 627.5,908.1 630.6,908.5 C634.5,909.0 638.4,909.0 642.3,909.0 C645.4,909.0 648.6,888.2 651.7,880.4 C657.9,864.9 664.2,854.7 670.4,854.7 C672.7,854.7 675.1,855.5 677.4,859.4 C680.5,864.6 683.7,887.4 686.8,887.4 C692.3,887.4 697.7,860.5 703.2,860.5 C705.5,860.5 707.9,862.7 710.2,871.1 C713.3,882.2 716.3,929.6 719.4,929.6 C722.5,929.6 725.6,919.8 728.7,908.5 C732.6,894.2 736.5,871.1 740.4,845.3 C742.7,829.8 745.1,806.5 747.4,793.8 C750.5,776.8 753.7,769.7 756.8,766.9 C760.7,763.4 764.6,763.4 768.5,763.4 C771.6,763.4 774.8,763.4 777.9,770.4 C780.2,775.6 782.6,787.0 784.9,793.8 C788.8,805.2 792.7,813.6 796.6,819.6 C800.5,825.6 804.4,828.6 808.3,829.6 C817.7,832.0 827.0,832.0 836.4,832.0 C841.1,832.0 845.7,805.5 850.4,805.5 C853.5,805.5 856.7,808.7 859.8,814.9 C863.7,822.6 867.6,839.9 871.5,852.3 C875.8,866.0 880.1,893.3 884.4,893.3 C887.9,893.3 891.4,842.0 894.9,831.3 C897.2,824.1 899.6,823.5 901.9,823.1 C912.8,821.4 923.8,821.4 934.7,821.4 C938.6,821.4 942.5,835.4 946.4,838.3 C948.7,840.0 951.1,840.6 953.4,840.6 C958.1,840.6 962.7,831.7 967.4,831.7 C969.8,831.7 972.1,834.0 974.5,843.0 C977.2,853.2 979.9,894.0 982.6,894.0 C985.3,894.0 988.1,843.8 990.8,828.9 C993.5,814.0 996.3,804.4 999.0,804.4 C1002.5,804.4 1005.9,814.5 1009.4,821.9 C1012.5,828.5 1015.6,838.8 1018.7,845.3 C1023.0,854.4 1027.3,865.2 1031.6,865.2 C1034.3,865.2 1037.1,849.8 1039.8,845.3 C1042.9,840.2 1046.0,838.3 1049.1,838.3 C1053.8,838.3 1058.5,838.7 1063.2,843.0 C1067.9,847.3 1072.5,861.0 1077.2,864.0 C1082.7,867.5 1088.1,867.5 1093.6,867.5 C1095.9,867.5 1098.3,867.5 1100.6,866.4 C1105.3,864.2 1110.0,833.6 1114.7,833.6 C1120.1,833.6 1125.6,853.0 1131.0,864.0 C1135.7,873.5 1140.4,885.2 1145.1,894.5 C1150.9,906.0 1156.8,924.9 1162.6,924.9 C1166.1,924.9 1169.7,897.5 1173.2,885.1 C1177.9,868.7 1182.5,846.1 1187.2,840.6 C1191.1,836.0 1195.0,836.0 1198.9,836.0 C1204.4,836.0 1209.8,836.0 1215.3,843.0 C1218.4,847.0 1221.6,863.7 1224.7,871.1 C1231.7,887.7 1238.7,891.6 1245.7,891.6 C1248.1,891.6 1250.4,887.1 1252.8,878.1 C1255.1,869.2 1257.5,844.9 1259.8,838.3 C1266.0,820.7 1272.3,820.7 1278.5,820.7 C1280.4,820.7 1282.4,826.5 1284.3,833.6 C1286.3,840.8 1288.2,861.9 1290.2,864.0 C1292.5,866.4 1294.7,866.4 1297.0,866.4 C1301.7,866.4 1306.4,860.5 1311.1,860.5 C1313.4,860.5 1315.8,863.8 1318.1,866.4 C1321.2,869.8 1324.3,880.0 1327.4,880.0 C1330.5,880.0 1333.7,877.3 1336.8,871.1 C1341.5,861.9 1346.1,831.1 1350.8,821.9 C1353.9,815.7 1357.1,813.0 1360.2,813.0 C1364.1,813.0 1368.0,818.0 1371.9,824.2 C1375.8,830.4 1379.7,838.5 1383.6,850.0 C1386.6,858.7 1389.5,881.1 1392.5,881.1 C1395.0,881.1 1397.5,848.6 1400.0,838.3 C1403.1,825.4 1406.3,818.9 1409.4,818.4 C1417.2,817.2 1425.0,818.4 1432.8,817.2 C1437.5,816.5 1442.1,809.5 1446.8,800.8 C1450.7,793.5 1454.6,772.1 1458.5,772.1 C1460.8,772.1 1463.2,772.1 1465.5,791.5 C1467.1,804.5 1468.6,842.9 1470.2,852.3 C1471.8,861.7 1473.3,861.7 1474.9,861.7 C1477.2,861.7 1479.6,837.9 1481.9,828.9 C1485.0,816.8 1488.2,802.7 1491.3,802.7 C1494.4,802.7 1497.5,816.0 1500.6,824.2 C1503.7,832.5 1506.9,845.4 1510.0,852.3 C1514.7,862.6 1519.3,867.1 1524.0,867.1 C1526.3,867.1 1528.7,859.3 1531.0,854.7 C1534.1,848.5 1537.3,833.6 1540.4,833.6 C1545.9,833.6 1551.3,848.1 1556.8,848.1 C1562.3,848.1 1567.7,821.9 1573.2,821.9 C1575.9,821.9 1578.7,833.1 1581.4,845.3 C1584.1,857.2 1586.7,893.3 1589.4,893.3 C1591.7,893.3 1594.1,865.9 1596.4,857.0 C1599.5,845.2 1602.6,838.8 1605.7,838.8 C1611.2,838.8 1616.6,845.3 1622.1,845.3 C1628.3,845.3 1634.6,837.2 1640.8,828.9 C1645.5,822.6 1650.2,805.1 1654.9,805.1 C1657.2,805.1 1659.6,821.1 1661.9,828.9 C1665.0,839.3 1668.2,859.4 1671.3,859.4 C1675.2,859.4 1679.1,849.6 1683.0,845.3 C1687.7,840.1 1692.3,835.7 1697.0,831.3 C1704.8,823.9 1712.6,816.4 1720.4,811.4 C1725.9,807.9 1731.3,803.2 1736.8,803.2 C1742.3,803.2 1747.7,819.6 1753.2,819.6 C1757.9,819.6 1762.5,808.3 1767.2,808.3 C1773.4,808.3 1779.7,812.5 1785.9,812.5 C1791.9,812.5 1797.9,812.5 1803.9,812.5 C1805.8,812.5 1807.8,820.8 1809.7,827.7 C1812.1,836.4 1814.6,862.8 1817.0,862.8 C1821.4,862.8 1825.8,862.8 1830.2,859.9 C1835.1,856.7 1839.9,846.8 1844.8,842.3 C1847.2,840.0 1849.7,836.5 1852.1,836.5 C1854.5,836.5 1857.0,845.4 1859.4,854.0 C1862.3,864.4 1865.3,897.3 1868.2,897.3 C1871.1,897.3 1874.1,870.3 1877.0,862.8 C1879.4,856.6 1881.9,852.6 1884.3,852.6 C1887.7,852.6 1891.1,865.2 1894.5,868.7 C1896.5,870.7 1898.4,873.0 1900.4,873.0 C1906.2,873.0 1912.1,866.3 1917.9,866.3 C1923.3,866.3 1928.6,870.8 1934.0,873.0" fill="none" stroke="#5cb99b" stroke-width="1.6" clip-path="url(#cup)"/>
<path d="M145.9,917.9 C151.5,900.9 157.2,866.8 162.8,866.8 C165.5,866.8 168.3,925.2 171.0,949.5 C173.6,972.3 176.1,1009.1 178.7,1009.1 C184.3,1009.1 189.9,965.7 195.5,949.5 C200.8,934.2 206.1,913.6 211.4,913.6 C215.7,913.6 220.0,938.2 224.3,949.5 C231.1,967.4 237.9,998.6 244.7,998.6 C247.2,998.6 249.7,973.2 252.2,949.5 C255.1,921.7 258.1,836.0 261.0,836.0 C266.7,836.0 272.3,901.9 278.0,916.0 C282.0,925.9 286.0,921.7 290.0,927.0 C292.3,930.1 294.7,933.3 297.0,938.0 C298.7,941.3 300.3,945.9 302.0,949.5 C304.6,955.0 307.1,964.2 309.7,964.2 C312.1,964.2 314.4,957.1 316.8,949.5 C320.2,938.6 323.6,900.3 327.0,900.3 C331.0,900.3 335.0,936.5 339.0,949.5 C340.2,953.3 341.3,960.0 342.5,960.0 C344.1,960.0 345.6,955.8 347.2,949.5 C351.2,933.2 355.3,844.1 359.3,844.1 C364.8,844.1 370.2,870.6 375.7,899.1 C378.4,913.4 381.2,937.1 383.9,949.5 C386.5,961.2 389.0,972.9 391.6,972.9 C394.0,972.9 396.3,956.6 398.7,949.5 C402.0,939.7 405.2,924.4 408.5,924.4 C413.2,924.4 417.8,946.0 422.5,946.0 C426.3,946.0 430.2,946.0 434.0,943.6 C437.9,941.2 441.8,935.3 445.7,924.9 C448.1,918.6 450.4,907.3 452.8,901.5 C457.5,890.0 462.1,889.8 466.8,889.8 C470.7,889.8 474.6,889.8 478.5,891.0 C482.4,892.2 486.3,916.7 490.2,916.7 C495.7,916.7 501.1,885.1 506.6,885.1 C511.3,885.1 515.9,897.0 520.6,901.5 C526.1,906.8 531.5,910.0 537.0,913.2 C543.2,916.8 549.5,921.4 555.7,921.4 C558.1,921.4 560.4,921.4 562.8,920.2 C565.9,918.6 569.0,910.6 572.1,906.2 C578.3,897.3 584.6,891.8 590.8,882.8 C595.5,876.0 600.2,860.5 604.9,860.5 C607.2,860.5 609.6,861.6 611.9,866.4 C615.0,872.9 618.2,894.5 621.3,901.5 C624.4,908.4 627.5,908.1 630.6,908.5 C634.5,909.0 638.4,909.0 642.3,909.0 C645.4,909.0 648.6,888.2 651.7,880.4 C657.9,864.9 664.2,854.7 670.4,854.7 C672.7,854.7 675.1,855.5 677.4,859.4 C680.5,864.6 683.7,887.4 686.8,887.4 C692.3,887.4 697.7,860.5 703.2,860.5 C705.5,860.5 707.9,862.7 710.2,871.1 C713.3,882.2 716.3,929.6 719.4,929.6 C722.5,929.6 725.6,919.8 728.7,908.5 C732.6,894.2 736.5,871.1 740.4,845.3 C742.7,829.8 745.1,806.5 747.4,793.8 C750.5,776.8 753.7,769.7 756.8,766.9 C760.7,763.4 764.6,763.4 768.5,763.4 C771.6,763.4 774.8,763.4 777.9,770.4 C780.2,775.6 782.6,787.0 784.9,793.8 C788.8,805.2 792.7,813.6 796.6,819.6 C800.5,825.6 804.4,828.6 808.3,829.6 C817.7,832.0 827.0,832.0 836.4,832.0 C841.1,832.0 845.7,805.5 850.4,805.5 C853.5,805.5 856.7,808.7 859.8,814.9 C863.7,822.6 867.6,839.9 871.5,852.3 C875.8,866.0 880.1,893.3 884.4,893.3 C887.9,893.3 891.4,842.0 894.9,831.3 C897.2,824.1 899.6,823.5 901.9,823.1 C912.8,821.4 923.8,821.4 934.7,821.4 C938.6,821.4 942.5,835.4 946.4,838.3 C948.7,840.0 951.1,840.6 953.4,840.6 C958.1,840.6 962.7,831.7 967.4,831.7 C969.8,831.7 972.1,834.0 974.5,843.0 C977.2,853.2 979.9,894.0 982.6,894.0 C985.3,894.0 988.1,843.8 990.8,828.9 C993.5,814.0 996.3,804.4 999.0,804.4 C1002.5,804.4 1005.9,814.5 1009.4,821.9 C1012.5,828.5 1015.6,838.8 1018.7,845.3 C1023.0,854.4 1027.3,865.2 1031.6,865.2 C1034.3,865.2 1037.1,849.8 1039.8,845.3 C1042.9,840.2 1046.0,838.3 1049.1,838.3 C1053.8,838.3 1058.5,838.7 1063.2,843.0 C1067.9,847.3 1072.5,861.0 1077.2,864.0 C1082.7,867.5 1088.1,867.5 1093.6,867.5 C1095.9,867.5 1098.3,867.5 1100.6,866.4 C1105.3,864.2 1110.0,833.6 1114.7,833.6 C1120.1,833.6 1125.6,853.0 1131.0,864.0 C1135.7,873.5 1140.4,885.2 1145.1,894.5 C1150.9,906.0 1156.8,924.9 1162.6,924.9 C1166.1,924.9 1169.7,897.5 1173.2,885.1 C1177.9,868.7 1182.5,846.1 1187.2,840.6 C1191.1,836.0 1195.0,836.0 1198.9,836.0 C1204.4,836.0 1209.8,836.0 1215.3,843.0 C1218.4,847.0 1221.6,863.7 1224.7,871.1 C1231.7,887.7 1238.7,891.6 1245.7,891.6 C1248.1,891.6 1250.4,887.1 1252.8,878.1 C1255.1,869.2 1257.5,844.9 1259.8,838.3 C1266.0,820.7 1272.3,820.7 1278.5,820.7 C1280.4,820.7 1282.4,826.5 1284.3,833.6 C1286.3,840.8 1288.2,861.9 1290.2,864.0 C1292.5,866.4 1294.7,866.4 1297.0,866.4 C1301.7,866.4 1306.4,860.5 1311.1,860.5 C1313.4,860.5 1315.8,863.8 1318.1,866.4 C1321.2,869.8 1324.3,880.0 1327.4,880.0 C1330.5,880.0 1333.7,877.3 1336.8,871.1 C1341.5,861.9 1346.1,831.1 1350.8,821.9 C1353.9,815.7 1357.1,813.0 1360.2,813.0 C1364.1,813.0 1368.0,818.0 1371.9,824.2 C1375.8,830.4 1379.7,838.5 1383.6,850.0 C1386.6,858.7 1389.5,881.1 1392.5,881.1 C1395.0,881.1 1397.5,848.6 1400.0,838.3 C1403.1,825.4 1406.3,818.9 1409.4,818.4 C1417.2,817.2 1425.0,818.4 1432.8,817.2 C1437.5,816.5 1442.1,809.5 1446.8,800.8 C1450.7,793.5 1454.6,772.1 1458.5,772.1 C1460.8,772.1 1463.2,772.1 1465.5,791.5 C1467.1,804.5 1468.6,842.9 1470.2,852.3 C1471.8,861.7 1473.3,861.7 1474.9,861.7 C1477.2,861.7 1479.6,837.9 1481.9,828.9 C1485.0,816.8 1488.2,802.7 1491.3,802.7 C1494.4,802.7 1497.5,816.0 1500.6,824.2 C1503.7,832.5 1506.9,845.4 1510.0,852.3 C1514.7,862.6 1519.3,867.1 1524.0,867.1 C1526.3,867.1 1528.7,859.3 1531.0,854.7 C1534.1,848.5 1537.3,833.6 1540.4,833.6 C1545.9,833.6 1551.3,848.1 1556.8,848.1 C1562.3,848.1 1567.7,821.9 1573.2,821.9 C1575.9,821.9 1578.7,833.1 1581.4,845.3 C1584.1,857.2 1586.7,893.3 1589.4,893.3 C1591.7,893.3 1594.1,865.9 1596.4,857.0 C1599.5,845.2 1602.6,838.8 1605.7,838.8 C1611.2,838.8 1616.6,845.3 1622.1,845.3 C1628.3,845.3 1634.6,837.2 1640.8,828.9 C1645.5,822.6 1650.2,805.1 1654.9,805.1 C1657.2,805.1 1659.6,821.1 1661.9,828.9 C1665.0,839.3 1668.2,859.4 1671.3,859.4 C1675.2,859.4 1679.1,849.6 1683.0,845.3 C1687.7,840.1 1692.3,835.7 1697.0,831.3 C1704.8,823.9 1712.6,816.4 1720.4,811.4 C1725.9,807.9 1731.3,803.2 1736.8,803.2 C1742.3,803.2 1747.7,819.6 1753.2,819.6 C1757.9,819.6 1762.5,808.3 1767.2,808.3 C1773.4,808.3 1779.7,812.5 1785.9,812.5 C1791.9,812.5 1797.9,812.5 1803.9,812.5 C1805.8,812.5 1807.8,820.8 1809.7,827.7 C1812.1,836.4 1814.6,862.8 1817.0,862.8 C1821.4,862.8 1825.8,862.8 1830.2,859.9 C1835.1,856.7 1839.9,846.8 1844.8,842.3 C1847.2,840.0 1849.7,836.5 1852.1,836.5 C1854.5,836.5 1857.0,845.4 1859.4,854.0 C1862.3,864.4 1865.3,897.3 1868.2,897.3 C1871.1,897.3 1874.1,870.3 1877.0,862.8 C1879.4,856.6 1881.9,852.6 1884.3,852.6 C1887.7,852.6 1891.1,865.2 1894.5,868.7 C1896.5,870.7 1898.4,873.0 1900.4,873.0 C1906.2,873.0 1912.1,866.3 1917.9,866.3 C1923.3,866.3 1928.6,870.8 1934.0,873.0" fill="none" stroke="#e4535a" stroke-width="1.6" clip-path="url(#cdn)"/>
<path d="M145.9,1003.7 C151.5,1002.2 157.2,999.3 162.8,999.3 C168.2,999.3 173.7,1002.3 179.1,1003.3 C190.8,1005.5 202.5,1005.6 214.2,1005.6 C218.9,1005.6 223.6,1002.6 228.3,1002.6 C233.8,1002.6 239.2,1011.5 244.7,1011.5 C253.3,1011.5 261.8,999.3 270.4,999.3 C278.2,999.3 286.0,999.3 293.8,1000.2 C299.3,1000.8 304.7,1003.9 310.2,1004.5 C316.4,1005.2 322.7,1004.5 328.9,1005.2 C333.6,1005.7 338.3,1011.5 343.0,1011.5 C349.2,1011.5 355.5,1006.6 361.7,1004.5 C366.4,1002.9 371.0,1001.9 375.7,1000.2 C381.2,998.2 386.6,992.8 392.1,992.8 C398.3,992.8 404.6,993.9 410.8,995.6 C414.7,996.7 418.6,999.8 422.5,999.8 C427.9,999.8 433.3,995.5 438.7,995.1 C445.7,994.6 452.8,994.6 459.8,994.6 C464.5,994.6 469.1,998.1 473.8,998.1 C479.3,998.1 484.7,996.7 490.2,996.7 C496.4,996.7 502.7,996.7 508.9,996.7 C514.4,996.7 519.8,994.6 525.3,994.6 C530.8,994.6 536.2,996.0 541.7,997.4 C546.4,998.6 551.0,1002.1 555.7,1002.1 C561.2,1002.1 566.6,998.1 572.1,998.1 C577.6,998.1 583.0,1003.3 588.5,1003.3 C594.0,1003.3 599.4,999.3 604.9,999.3 C609.6,999.3 614.2,1000.2 618.9,1001.6 C625.1,1003.4 631.4,1010.3 637.6,1010.3 C641.5,1010.3 645.4,1004.3 649.3,1002.1 C655.6,998.6 661.8,995.8 668.1,995.8 C673.6,995.8 679.0,998.5 684.5,999.3 C691.5,1000.4 698.5,1000.9 705.5,1000.9 C707.8,1000.9 710.2,996.4 712.5,992.7 C714.8,989.0 717.1,983.1 719.4,978.7 C725.6,966.7 731.9,960.1 738.1,948.3 C743.6,937.9 749.0,924.5 754.5,913.2 C759.2,903.5 763.8,885.1 768.5,885.1 C774.0,885.1 779.4,898.0 784.9,898.0 C789.6,898.0 794.2,892.6 798.9,889.8 C806.7,885.2 814.5,879.3 822.3,875.7 C826.2,873.9 830.1,875.1 834.0,871.1 C839.5,865.5 844.9,839.5 850.4,839.5 C855.1,839.5 859.8,857.3 864.5,860.5 C871.5,865.2 878.5,865.2 885.5,865.2 C891.7,865.2 898.0,854.3 904.2,851.2 C909.7,848.5 915.1,846.5 920.6,846.5 C924.5,846.5 928.4,859.4 932.3,859.4 C938.5,859.4 944.8,858.2 951.0,858.2 C956.5,858.2 961.9,865.2 967.4,865.2 C972.1,865.2 976.8,852.9 981.5,845.3 C986.2,837.7 990.8,819.6 995.5,819.6 C1001.7,819.6 1007.8,824.6 1014.0,827.8 C1018.7,830.3 1023.4,836.0 1028.1,836.0 C1035.1,836.0 1042.1,833.6 1049.1,833.6 C1053.8,833.6 1058.5,850.0 1063.2,850.0 C1068.7,850.0 1074.1,843.0 1079.6,843.0 C1085.8,843.0 1092.1,846.5 1098.3,846.5 C1103.0,846.5 1107.6,834.8 1112.3,834.8 C1119.3,834.8 1126.4,834.8 1133.4,837.1 C1137.3,838.4 1141.2,845.5 1145.1,848.8 C1154.5,856.7 1163.8,861.7 1173.2,861.7 C1182.6,861.7 1191.9,861.7 1201.3,861.2 C1206.0,861.0 1210.6,856.2 1215.3,852.3 C1219.2,849.0 1223.1,840.6 1227.0,840.6 C1231.7,840.6 1236.3,844.9 1241.0,850.0 C1246.5,855.9 1251.9,875.7 1257.4,875.7 C1261.3,875.7 1265.2,875.3 1269.1,873.4 C1276.1,870.0 1283.2,854.6 1290.2,852.3 C1297.2,850.0 1304.1,850.0 1311.1,850.0 C1316.5,850.0 1322.0,860.5 1327.4,860.5 C1333.7,860.5 1339.9,852.8 1346.2,850.0 C1355.5,845.9 1364.9,842.5 1374.2,842.5 C1380.5,842.5 1386.7,846.5 1393.0,846.5 C1397.7,846.5 1402.3,834.1 1407.0,830.1 C1411.7,826.1 1416.4,822.7 1421.1,822.6 C1430.4,822.4 1439.8,822.4 1449.1,822.4 C1453.8,822.4 1458.5,822.4 1463.2,826.6 C1466.3,829.4 1469.4,836.9 1472.5,840.6 C1477.2,846.3 1481.9,851.2 1486.6,851.2 C1492.8,851.2 1499.1,848.7 1505.3,847.7 C1510.8,846.8 1516.2,845.3 1521.7,845.3 C1525.6,845.3 1529.5,846.6 1533.4,847.7 C1541.2,849.9 1549.0,858.2 1556.8,858.2 C1564.5,858.2 1572.3,853.1 1580.0,850.0 C1587.8,846.9 1595.6,839.5 1603.4,839.5 C1609.6,839.5 1615.9,843.0 1622.1,843.0 C1629.1,843.0 1636.2,843.0 1643.2,843.0 C1647.9,843.0 1652.5,837.6 1657.2,833.6 C1661.1,830.3 1665.0,821.9 1668.9,821.9 C1674.4,821.9 1679.8,822.1 1685.3,823.1 C1691.5,824.2 1697.8,827.3 1704.0,828.5 C1710.3,829.7 1716.5,830.1 1722.8,830.1 C1726.7,830.1 1730.6,821.6 1734.5,818.4 C1739.9,813.9 1745.4,809.0 1750.8,809.0 C1753.2,809.0 1755.5,809.4 1757.9,811.4 C1761.0,814.0 1764.1,822.9 1767.2,825.4 C1771.1,828.5 1775.0,827.6 1778.9,828.5 C1787.5,830.5 1796.1,830.5 1804.7,832.4 C1809.4,833.4 1814.0,832.7 1818.7,836.0 C1822.6,838.8 1826.5,846.3 1830.4,848.8 C1835.9,852.3 1841.3,852.3 1846.8,852.3 C1854.9,852.3 1863.0,849.6 1871.1,849.6 C1877.0,849.6 1882.8,850.7 1888.7,851.7 C1893.6,852.5 1898.4,854.9 1903.3,854.9 C1913.5,854.9 1923.8,850.8 1934.0,848.8" fill="none" stroke="#e3b95a" stroke-width="1.7"/>
</svg>
<svg style="left:1765px;top:985px" width="165" height="50" viewBox="0 0 2048 621"><g fill="#a6a6a6">
<path d="M215,70 L252,100 C285,90 335,90 368,100 L405,70 L418,132 C470,142 510,170 515,205 C495,214 470,220 455,222 C450,272 430,322 402,350 L405,362 C440,382 460,420 452,460 C445,488 425,500 405,505 L388,545 L318,545 L308,492 L292,492 L282,545 L228,545 L215,505 C182,490 165,452 175,412 C182,385 200,366 215,356 C182,322 162,272 150,222 C125,218 102,212 95,202 C102,168 142,142 200,132 Z"/>
</g><path d="M162,528 C182,515 200,505 220,495" stroke="#a6a6a6" stroke-width="14" fill="none"/></svg>
<div class="a" style="left:1814.6px;top:998.4px;font-size:23.2px;line-height:23.2px;color:#a6a6a6;font-weight:bold;transform:scaleY(1.25);transform-origin:0 19.6px;">coinglass</div>
<svg style="left:0;top:0" width="2048" height="1197" viewBox="0 0 2048 1197">
<defs><clipPath id="nsel"><rect x="1579.3" y="1078" width="366" height="89"/></clipPath></defs>
<polygon points="141.7,1166.5 141.7,1099.9 146.1,1098.4 156.4,1097.8 157.8,1099.3 165.2,1094.9 188.6,1094.6 200.3,1100.8 206.2,1104.3 215.0,1099.3 225.2,1096.4 241.3,1097.2 251.6,1098.4 260.4,1095.8 272.1,1095.2 285.3,1097.8 289.7,1103.1 299.9,1108.1 311.7,1105.7 317.5,1109.0 335.1,1111.0 341.0,1107.5 346.8,1106.0 360.0,1106.3 367.3,1109.0 387.8,1108.1 434.7,1106.9 446.4,1103.7 475.7,1101.4 484.5,1102.2 488.9,1108.1 508.0,1110.4 546.1,1115.4 551.9,1113.4 563.6,1111.9 569.5,1107.5 590.0,1106.6 592.9,1110.4 610.5,1110.4 622.2,1111.0 651.5,1108.7 672.0,1109.6 683.8,1115.4 692.6,1112.5 701.4,1115.4 716.0,1111.6 720.0,1111.6 727.3,1107.5 731.7,1110.1 746.4,1114.5 754.6,1125.1 761.0,1119.8 764.0,1122.7 783.0,1120.7 788.9,1123.3 802.0,1125.1 837.2,1123.3 843.1,1125.1 848.9,1122.7 869.4,1122.7 895.8,1123.3 898.7,1122.2 907.5,1124.2 933.9,1122.2 942.7,1124.2 954.4,1120.4 963.2,1121.3 974.9,1130.1 983.7,1128.0 1001.3,1131.5 1005.7,1136.8 1013.0,1133.0 1027.6,1133.0 1032.0,1127.1 1045.2,1136.8 1054.0,1134.5 1065.7,1132.4 1083.3,1135.0 1092.1,1133.9 1103.8,1138.0 1112.6,1140.9 1130.2,1140.3 1188.8,1140.9 1200.5,1137.4 1212.2,1139.4 1247.4,1136.8 1282.6,1138.3 1288.4,1140.9 1310.0,1143.6 1322.7,1142.4 1330.6,1140.5 1340.1,1141.4 1343.3,1143.0 1376.6,1143.6 1386.2,1150.3 1392.5,1148.1 1402.0,1150.0 1408.4,1150.0 1413.1,1146.2 1419.5,1149.3 1436.9,1147.8 1441.7,1146.2 1475.0,1147.8 1519.5,1147.8 1529.0,1146.2 1533.7,1147.8 1544.8,1143.9 1579.8,1143.0 1611.5,1143.6 1630.5,1142.4 1659.1,1142.4 1681.3,1143.6 1694.0,1143.0 1708.3,1131.3 1719.4,1129.7 1724.2,1126.5 1728.9,1128.7 1738.4,1127.1 1747.9,1128.7 1754.3,1124.6 1767.0,1127.1 1779.7,1125.5 1792.4,1128.7 1801.9,1126.5 1808.2,1129.7 1817.8,1127.1 1822.5,1128.7 1836.8,1126.5 1846.3,1124.6 1855.9,1127.1 1868.5,1128.1 1881.2,1126.5 1893.9,1124.6 1908.2,1123.3 1919.3,1125.9 1928.8,1127.1 1936.8,1127.1 1945.0,1127.1 1945,1166.5" fill="#0c101e"/>
<polyline points="141.7,1099.9 146.1,1098.4 156.4,1097.8 157.8,1099.3 165.2,1094.9 188.6,1094.6 200.3,1100.8 206.2,1104.3 215.0,1099.3 225.2,1096.4 241.3,1097.2 251.6,1098.4 260.4,1095.8 272.1,1095.2 285.3,1097.8 289.7,1103.1 299.9,1108.1 311.7,1105.7 317.5,1109.0 335.1,1111.0 341.0,1107.5 346.8,1106.0 360.0,1106.3 367.3,1109.0 387.8,1108.1 434.7,1106.9 446.4,1103.7 475.7,1101.4 484.5,1102.2 488.9,1108.1 508.0,1110.4 546.1,1115.4 551.9,1113.4 563.6,1111.9 569.5,1107.5 590.0,1106.6 592.9,1110.4 610.5,1110.4 622.2,1111.0 651.5,1108.7 672.0,1109.6 683.8,1115.4 692.6,1112.5 701.4,1115.4 716.0,1111.6 720.0,1111.6 727.3,1107.5 731.7,1110.1 746.4,1114.5 754.6,1125.1 761.0,1119.8 764.0,1122.7 783.0,1120.7 788.9,1123.3 802.0,1125.1 837.2,1123.3 843.1,1125.1 848.9,1122.7 869.4,1122.7 895.8,1123.3 898.7,1122.2 907.5,1124.2 933.9,1122.2 942.7,1124.2 954.4,1120.4 963.2,1121.3 974.9,1130.1 983.7,1128.0 1001.3,1131.5 1005.7,1136.8 1013.0,1133.0 1027.6,1133.0 1032.0,1127.1 1045.2,1136.8 1054.0,1134.5 1065.7,1132.4 1083.3,1135.0 1092.1,1133.9 1103.8,1138.0 1112.6,1140.9 1130.2,1140.3 1188.8,1140.9 1200.5,1137.4 1212.2,1139.4 1247.4,1136.8 1282.6,1138.3 1288.4,1140.9 1310.0,1143.6 1322.7,1142.4 1330.6,1140.5 1340.1,1141.4 1343.3,1143.0 1376.6,1143.6 1386.2,1150.3 1392.5,1148.1 1402.0,1150.0 1408.4,1150.0 1413.1,1146.2 1419.5,1149.3 1436.9,1147.8 1441.7,1146.2 1475.0,1147.8 1519.5,1147.8 1529.0,1146.2 1533.7,1147.8 1544.8,1143.9 1579.8,1143.0 1611.5,1143.6 1630.5,1142.4 1659.1,1142.4 1681.3,1143.6 1694.0,1143.0 1708.3,1131.3 1719.4,1129.7 1724.2,1126.5 1728.9,1128.7 1738.4,1127.1 1747.9,1128.7 1754.3,1124.6 1767.0,1127.1 1779.7,1125.5 1792.4,1128.7 1801.9,1126.5 1808.2,1129.7 1817.8,1127.1 1822.5,1128.7 1836.8,1126.5 1846.3,1124.6 1855.9,1127.1 1868.5,1128.1 1881.2,1126.5 1893.9,1124.6 1908.2,1123.3 1919.3,1125.9 1928.8,1127.1 1936.8,1127.1 1945.0,1127.1" fill="none" stroke="#3f5ea8" stroke-width="1.3"/>
<rect x="1579.3" y="1078.6" width="366" height="88.2" fill="#080c1b"/>
<polygon points="141.7,1166.5 141.7,1099.9 146.1,1098.4 156.4,1097.8 157.8,1099.3 165.2,1094.9 188.6,1094.6 200.3,1100.8 206.2,1104.3 215.0,1099.3 225.2,1096.4 241.3,1097.2 251.6,1098.4 260.4,1095.8 272.1,1095.2 285.3,1097.8 289.7,1103.1 299.9,1108.1 311.7,1105.7 317.5,1109.0 335.1,1111.0 341.0,1107.5 346.8,1106.0 360.0,1106.3 367.3,1109.0 387.8,1108.1 434.7,1106.9 446.4,1103.7 475.7,1101.4 484.5,1102.2 488.9,1108.1 508.0,1110.4 546.1,1115.4 551.9,1113.4 563.6,1111.9 569.5,1107.5 590.0,1106.6 592.9,1110.4 610.5,1110.4 622.2,1111.0 651.5,1108.7 672.0,1109.6 683.8,1115.4 692.6,1112.5 701.4,1115.4 716.0,1111.6 720.0,1111.6 727.3,1107.5 731.7,1110.1 746.4,1114.5 754.6,1125.1 761.0,1119.8 764.0,1122.7 783.0,1120.7 788.9,1123.3 802.0,1125.1 837.2,1123.3 843.1,1125.1 848.9,1122.7 869.4,1122.7 895.8,1123.3 898.7,1122.2 907.5,1124.2 933.9,1122.2 942.7,1124.2 954.4,1120.4 963.2,1121.3 974.9,1130.1 983.7,1128.0 1001.3,1131.5 1005.7,1136.8 1013.0,1133.0 1027.6,1133.0 1032.0,1127.1 1045.2,1136.8 1054.0,1134.5 1065.7,1132.4 1083.3,1135.0 1092.1,1133.9 1103.8,1138.0 1112.6,1140.9 1130.2,1140.3 1188.8,1140.9 1200.5,1137.4 1212.2,1139.4 1247.4,1136.8 1282.6,1138.3 1288.4,1140.9 1310.0,1143.6 1322.7,1142.4 1330.6,1140.5 1340.1,1141.4 1343.3,1143.0 1376.6,1143.6 1386.2,1150.3 1392.5,1148.1 1402.0,1150.0 1408.4,1150.0 1413.1,1146.2 1419.5,1149.3 1436.9,1147.8 1441.7,1146.2 1475.0,1147.8 1519.5,1147.8 1529.0,1146.2 1533.7,1147.8 1544.8,1143.9 1579.8,1143.0 1611.5,1143.6 1630.5,1142.4 1659.1,1142.4 1681.3,1143.6 1694.0,1143.0 1708.3,1131.3 1719.4,1129.7 1724.2,1126.5 1728.9,1128.7 1738.4,1127.1 1747.9,1128.7 1754.3,1124.6 1767.0,1127.1 1779.7,1125.5 1792.4,1128.7 1801.9,1126.5 1808.2,1129.7 1817.8,1127.1 1822.5,1128.7 1836.8,1126.5 1846.3,1124.6 1855.9,1127.1 1868.5,1128.1 1881.2,1126.5 1893.9,1124.6 1908.2,1123.3 1919.3,1125.9 1928.8,1127.1 1936.8,1127.1 1945.0,1127.1 1945,1166.5" fill="#222a44" clip-path="url(#nsel)"/>
<polyline points="141.7,1099.9 146.1,1098.4 156.4,1097.8 157.8,1099.3 165.2,1094.9 188.6,1094.6 200.3,1100.8 206.2,1104.3 215.0,1099.3 225.2,1096.4 241.3,1097.2 251.6,1098.4 260.4,1095.8 272.1,1095.2 285.3,1097.8 289.7,1103.1 299.9,1108.1 311.7,1105.7 317.5,1109.0 335.1,1111.0 341.0,1107.5 346.8,1106.0 360.0,1106.3 367.3,1109.0 387.8,1108.1 434.7,1106.9 446.4,1103.7 475.7,1101.4 484.5,1102.2 488.9,1108.1 508.0,1110.4 546.1,1115.4 551.9,1113.4 563.6,1111.9 569.5,1107.5 590.0,1106.6 592.9,1110.4 610.5,1110.4 622.2,1111.0 651.5,1108.7 672.0,1109.6 683.8,1115.4 692.6,1112.5 701.4,1115.4 716.0,1111.6 720.0,1111.6 727.3,1107.5 731.7,1110.1 746.4,1114.5 754.6,1125.1 761.0,1119.8 764.0,1122.7 783.0,1120.7 788.9,1123.3 802.0,1125.1 837.2,1123.3 843.1,1125.1 848.9,1122.7 869.4,1122.7 895.8,1123.3 898.7,1122.2 907.5,1124.2 933.9,1122.2 942.7,1124.2 954.4,1120.4 963.2,1121.3 974.9,1130.1 983.7,1128.0 1001.3,1131.5 1005.7,1136.8 1013.0,1133.0 1027.6,1133.0 1032.0,1127.1 1045.2,1136.8 1054.0,1134.5 1065.7,1132.4 1083.3,1135.0 1092.1,1133.9 1103.8,1138.0 1112.6,1140.9 1130.2,1140.3 1188.8,1140.9 1200.5,1137.4 1212.2,1139.4 1247.4,1136.8 1282.6,1138.3 1288.4,1140.9 1310.0,1143.6 1322.7,1142.4 1330.6,1140.5 1340.1,1141.4 1343.3,1143.0 1376.6,1143.6 1386.2,1150.3 1392.5,1148.1 1402.0,1150.0 1408.4,1150.0 1413.1,1146.2 1419.5,1149.3 1436.9,1147.8 1441.7,1146.2 1475.0,1147.8 1519.5,1147.8 1529.0,1146.2 1533.7,1147.8 1544.8,1143.9 1579.8,1143.0 1611.5,1143.6 1630.5,1142.4 1659.1,1142.4 1681.3,1143.6 1694.0,1143.0 1708.3,1131.3 1719.4,1129.7 1724.2,1126.5 1728.9,1128.7 1738.4,1127.1 1747.9,1128.7 1754.3,1124.6 1767.0,1127.1 1779.7,1125.5 1792.4,1128.7 1801.9,1126.5 1808.2,1129.7 1817.8,1127.1 1822.5,1128.7 1836.8,1126.5 1846.3,1124.6 1855.9,1127.1 1868.5,1128.1 1881.2,1126.5 1893.9,1124.6 1908.2,1123.3 1919.3,1125.9 1928.8,1127.1 1936.8,1127.1 1945.0,1127.1" fill="none" stroke="#7d93cf" stroke-width="1.3" clip-path="url(#nsel)"/>
<rect x="1574" y="1111.7" width="14.6" height="26" rx="7" fill="#3b3c49"/>
<rect x="1937.7" y="1111.7" width="14" height="26" rx="7" fill="#3b3c49"/>
<g stroke="#9a9ca5" stroke-width="1.2"><line x1="1579.4" y1="1120" x2="1579.4" y2="1130"/><line x1="1582.6" y1="1120" x2="1582.6" y2="1130"/>
<line x1="1943" y1="1120" x2="1943" y2="1130"/><line x1="1946.2" y1="1120" x2="1946.2" y2="1130"/></g>
</svg>
</body></html>
